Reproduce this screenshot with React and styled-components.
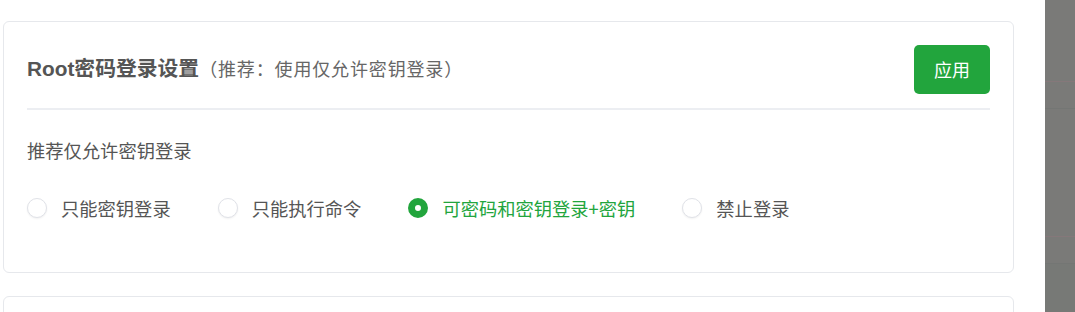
import React, { useState } from 'react'
import styled, { createGlobalStyle } from 'styled-components'

const GlobalStyle = createGlobalStyle`
  html, body {
    margin: 0;
    padding: 0;
    background: #fff;
  }
  body {
    font-family: 'Noto Sans CJK SC', 'Noto Sans', sans-serif;
  }
`

const options = ['只能密钥登录', '只能执行命令', '可密码和密钥登录+密钥', '禁止登录']

const App = () => {
  const [value, setValue] = useState(2)
  return (
    <Wrapper>
      <GlobalStyle />
      <Main>
        <Card>
          <Header>
            <Title>
              Root密码登录设置<small>（推荐：使用仅允许密钥登录）</small>
            </Title>
            <ApplyButton>应用</ApplyButton>
          </Header>
          <Body>
            <Hint>推荐仅允许密钥登录</Hint>
            <RadioGroup>
              {options.map((label, i) => (
                <RadioItem
                  key={label}
                  $checked={value === i}
                  onClick={() => setValue(i)}
                >
                  <span className='dot' />
                  <span>{label}</span>
                </RadioItem>
              ))}
            </RadioGroup>
          </Body>
        </Card>
        <Card $next />
      </Main>
      <Mask>
        <div style={{ height: 81 }} className='row warm' />
        <div style={{ height: 26 }} className='row' />
        <div style={{ height: 127 }} className='row warm' />
        <div style={{ height: 26 }} className='row' />
        <div className='rest' />
      </Mask>
    </Wrapper>
  )
}

const Wrapper = styled.div`
  display: flex;
  height: 312px;
  overflow: hidden;
`

const Main = styled.div`
  flex: 1;
  padding: 21px 31px 0 3px;
  display: flex;
  flex-direction: column;
  gap: 23px;
`

const Card = styled.section`
  border: 1px solid #e6e8ec;
  border-radius: 6px;
  background: #fff;
  height: ${(p) => (p.$next ? '40px' : 'auto')};
  flex-shrink: 0;
  padding: 0 23px;
`

const Header = styled.div`
  display: flex;
  justify-content: space-between;
  align-items: center;
  padding: 23px 0 14px;
  border-bottom: 2px solid #eceef2;
`

const Title = styled.h2`
  margin: 0;
  font-size: 20.8px;
  font-weight: 700;
  color: #555;
  line-height: 1;
  font-family: 'Liberation Sans', 'Noto Sans CJK SC', sans-serif;

  small {
    font-size: 18px;
    letter-spacing: 0.85px;
    font-weight: 400;
    color: #666;
    font-family: 'Noto Sans CJK SC', sans-serif;
  }
`

const ApplyButton = styled.button`
  all: unset;
  width: 76px;
  height: 49px;
  border-radius: 5px;
  background: #22a53d;
  color: #fff;
  font-size: 18px;
  text-align: center;
  line-height: 49px;
  cursor: pointer;
  font-family: 'Noto Sans CJK SC', sans-serif;
`

const Body = styled.div`
  padding: 28px 0 52px;
`

const Hint = styled.div`
  font-size: 18.3px;
  color: #555;
  line-height: 24px;
`

const RadioGroup = styled.div`
  display: flex;
  align-items: center;
  margin-top: 34px;
`

const RadioItem = styled.label`
  display: flex;
  align-items: center;
  gap: 14px;
  margin-right: 47px;
  font-size: 18.3px;
  line-height: 24px;
  color: ${(p) => (p.$checked ? '#22a53d' : '#555')};
  cursor: pointer;

  .dot {
    width: 20px;
    height: 20px;
    box-sizing: border-box;
    border-radius: 50%;
    border: ${(p) => (p.$checked ? '7px solid #22a53d' : '1px solid #e0e2e8')};
    background: #fff;
    box-shadow: ${(p) => (p.$checked ? 'none' : '0 1px 2px rgba(0,0,0,0.06)')};
  }
`

const Mask = styled.div`
  width: 30px;
  flex-shrink: 0;
  background: #7a7a78;
  display: flex;
  flex-direction: column;

  .row {
    border-bottom: 1px solid #747674;
  }
  .warm {
    border-bottom-color: #85787a;
  }
  .rest {
    flex: 1;
    background: #777976;
  }
`

export default App
